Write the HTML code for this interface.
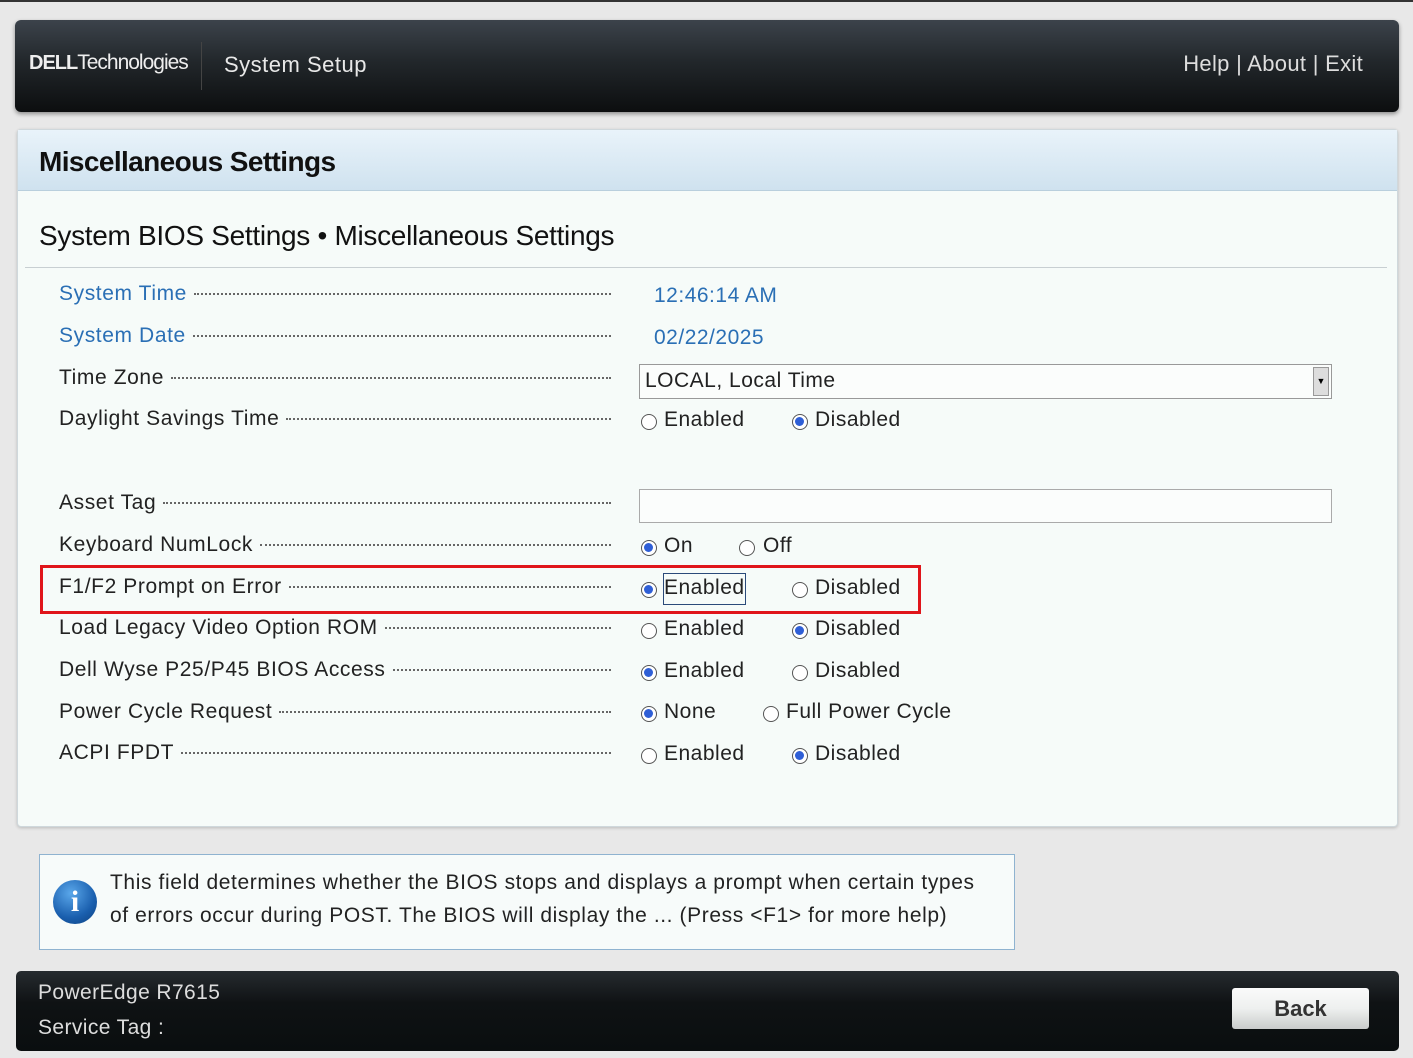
<!DOCTYPE html>
<html><head><meta charset="utf-8"><style>
*{margin:0;padding:0;box-sizing:border-box}
body{width:1413px;height:1058px;background:#e8e8e8;font-family:"Liberation Sans",sans-serif;position:relative;overflow:hidden;border-top:2px solid #333}
.abs{position:absolute}
#hdr{left:15px;top:18px;width:1384px;height:92px;border-radius:6px;background:linear-gradient(#3c434b,#22272b 45%,#0c0e0f);box-shadow:0 2px 4px rgba(0,0,0,.4)}
#panel{left:17px;top:127px;width:1381px;height:698px;background:#f6fbf9;border:1px solid #cfd8dc;border-radius:4px;box-shadow:0 1px 3px rgba(0,0,0,.2)}
#tb{left:0;top:0;width:100%;height:61px;background:linear-gradient(#e9f3fa,#cfe2ef);border-bottom:1px solid #b9cfdd}
.lbl{position:absolute;left:59px;width:552px;font-size:21px;color:#222;display:flex;align-items:baseline;white-space:nowrap;letter-spacing:.6px}
.lbl span.d{flex:1;border-bottom:2px dotted #666;margin-left:7px;height:1px;transform:translateY(-5px)}
.r{position:absolute;width:16px;height:16px;border-radius:50%;border:1.5px solid #555;background:#fff}
.r.on::after{content:"";position:absolute;left:2px;top:2px;width:9px;height:9px;border-radius:50%;background:#2f5fd6}
.t{position:absolute;font-size:21px;color:#222;white-space:nowrap;letter-spacing:.5px}
.lbl.blue,.t.blue{color:#2a6fb5}
</style></head><body>
<div id="hdr" class="abs">
 <div class="abs" style="left:14px;top:31px;color:#eee;font-size:21px;letter-spacing:-1px"><b style="font-size:20px">DELL</b>Technologies</div>
 <div class="abs" style="left:186px;top:22px;width:1px;height:48px;background:#444"></div>
 <div class="abs" style="left:209px;top:32px;color:#e8e8e8;font-size:22px;letter-spacing:.5px">System Setup</div>
 <div class="abs" style="right:36px;top:31px;color:#ddd;font-size:22px;letter-spacing:.3px">Help | About | Exit</div>
</div>
<div id="panel" class="abs">
 <div id="tb" class="abs"><div class="abs" style="left:21px;top:16px;font-size:28px;font-weight:bold;color:#111;letter-spacing:-.6px">Miscellaneous Settings</div></div>
 <div class="abs" style="left:21px;top:90px;font-size:28px;color:#111;letter-spacing:-.3px">System BIOS Settings • Miscellaneous Settings</div>
 <div class="abs" style="left:7px;top:137px;width:1362px;height:1px;background:#c8cfd2"></div>
</div>
<div class="lbl blue" style="top:280px">System Time<span class="d"></span></div>
<div class="t blue" style="left:654px;top:282px">12:46:14 AM</div>
<div class="lbl blue" style="top:322px">System Date<span class="d"></span></div>
<div class="t blue" style="left:654px;top:324px">02/22/2025</div>
<div class="lbl" style="top:364px">Time Zone<span class="d"></span></div>
<div class="abs" style="left:639px;top:362px;width:693px;height:35px;border:1px solid #999;background:#fbfdfc"><div class="t" style="left:5px;top:4px">LOCAL, Local Time</div><div class="abs" style="right:2px;top:2px;width:16px;height:29px;background:#ddd;border:1px solid #999;font-size:9px;text-align:center;line-height:27px">▼</div></div>
<div class="lbl" style="top:405px">Daylight Savings Time<span class="d"></span></div>
<div class="lbl" style="top:489px">Asset Tag<span class="d"></span></div>
<div class="abs" style="left:639px;top:487px;width:693px;height:34px;border:1px solid #aaa;background:#fbfdfc"></div>
<div class="lbl" style="top:531px">Keyboard NumLock<span class="d"></span></div>
<div class="lbl" style="top:573px">F1/F2 Prompt on Error<span class="d"></span></div>
<div class="lbl" style="top:614px">Load Legacy Video Option ROM<span class="d"></span></div>
<div class="lbl" style="top:656px">Dell Wyse P25/P45 BIOS Access<span class="d"></span></div>
<div class="lbl" style="top:698px">Power Cycle Request<span class="d"></span></div>
<div class="lbl" style="top:739px">ACPI FPDT<span class="d"></span></div>

<div class="r" style="left:641px;top:412px"></div><div class="t" style="left:664px;top:406px">Enabled</div>
<div class="r on" style="left:792px;top:412px"></div><div class="t" style="left:815px;top:406px">Disabled</div>
<div class="r on" style="left:641px;top:538px"></div><div class="t" style="left:664px;top:532px">On</div>
<div class="r" style="left:739px;top:538px"></div><div class="t" style="left:763px;top:532px">Off</div>
<div class="r on" style="left:641px;top:580px"></div><div class="abs" style="left:663px;top:571px;width:83px;height:32px;border:1.5px solid #2a4a7a"></div><div class="t" style="left:664px;top:574px">Enabled</div>
<div class="r" style="left:792px;top:580px"></div><div class="t" style="left:815px;top:574px">Disabled</div>
<div class="r" style="left:641px;top:621px"></div><div class="t" style="left:664px;top:615px">Enabled</div>
<div class="r on" style="left:792px;top:621px"></div><div class="t" style="left:815px;top:615px">Disabled</div>
<div class="r on" style="left:641px;top:663px"></div><div class="t" style="left:664px;top:657px">Enabled</div>
<div class="r" style="left:792px;top:663px"></div><div class="t" style="left:815px;top:657px">Disabled</div>
<div class="r on" style="left:641px;top:704px"></div><div class="t" style="left:664px;top:698px">None</div>
<div class="r" style="left:763px;top:704px"></div><div class="t" style="left:786px;top:698px">Full Power Cycle</div>
<div class="r" style="left:641px;top:746px"></div><div class="t" style="left:664px;top:740px">Enabled</div>
<div class="r on" style="left:792px;top:746px"></div><div class="t" style="left:815px;top:740px">Disabled</div>
<div class="abs" style="left:40px;top:563px;width:881px;height:49px;border:3px solid #e0151b"></div>

<div class="abs" style="left:39px;top:852px;width:976px;height:96px;border:1px solid #8fb3d0;background:#f7fbfa">
 <div class="abs" style="left:13px;top:25px;width:44px;height:44px;border-radius:50%;background:radial-gradient(circle at 40% 30%,#5aa7ea,#1a5fae 60%,#0d3f7e);color:#fff;font-weight:bold;font-size:30px;text-align:center;line-height:44px;font-family:'Liberation Serif',serif">i</div>
 <div class="abs" style="left:70px;top:11px;font-size:21px;line-height:33px;color:#222;letter-spacing:.6px">This field determines whether the BIOS stops and displays a prompt when certain types<br>of errors occur during POST. The BIOS will display the ... (Press &lt;F1&gt; for more help)</div>
</div>
<div class="abs" style="left:16px;top:969px;width:1383px;height:80px;border-radius:5px;background:linear-gradient(#262b2f,#0f1214 40%,#0a0e0f)">
 <div class="abs" style="left:22px;top:10px;color:#ddd;font-size:21px;letter-spacing:.4px">PowerEdge R7615</div>
 <div class="abs" style="left:22px;top:45px;color:#ddd;font-size:21px;letter-spacing:.4px">Service Tag :</div>
 <div class="abs" style="left:1216px;top:17px;width:137px;height:41px;border-radius:3px;background:linear-gradient(#fafafa,#eef0ef 50%,#c9cccb);font-weight:bold;font-size:22px;color:#333;text-align:center;line-height:41px">Back</div>
</div>
</body></html>
